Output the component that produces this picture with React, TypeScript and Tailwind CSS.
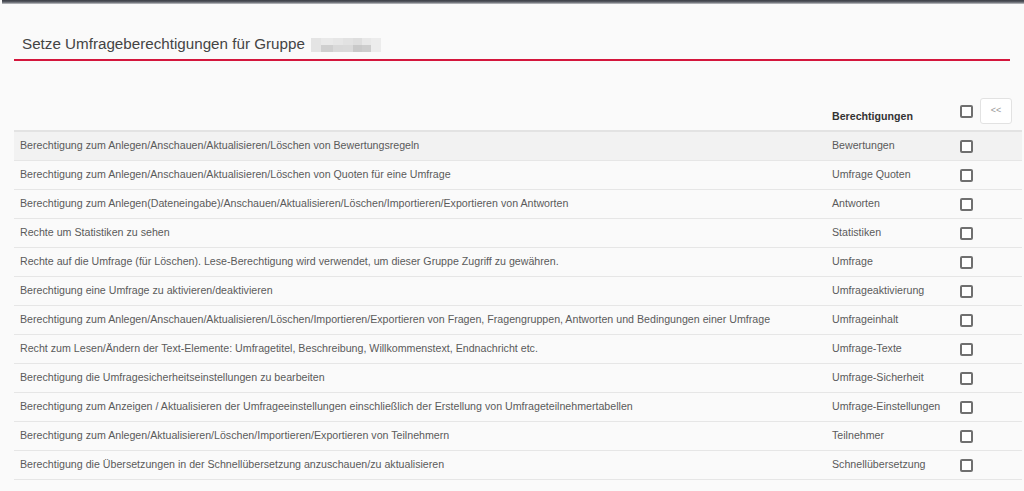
import { useState } from 'react';

const rows: [string, string][] = [
  ['Berechtigung zum Anlegen/Anschauen/Aktualisieren/Löschen von Bewertungsregeln', 'Bewertungen'],
  ['Berechtigung zum Anlegen/Anschauen/Aktualisieren/Löschen von Quoten für eine Umfrage', 'Umfrage Quoten'],
  ['Berechtigung zum Anlegen(Dateneingabe)/Anschauen/Aktualisieren/Löschen/Importieren/Exportieren von Antworten', 'Antworten'],
  ['Rechte um Statistiken zu sehen', 'Statistiken'],
  ['Rechte auf die Umfrage (für Löschen). Lese-Berechtigung wird verwendet, um dieser Gruppe Zugriff zu gewähren.', 'Umfrage'],
  ['Berechtigung eine Umfrage zu aktivieren/deaktivieren', 'Umfrageaktivierung'],
  ['Berechtigung zum Anlegen/Anschauen/Aktualisieren/Löschen/Importieren/Exportieren von Fragen, Fragengruppen, Antworten und Bedingungen einer Umfrage', 'Umfrageinhalt'],
  ['Recht zum Lesen/Ändern der Text-Elemente: Umfragetitel, Beschreibung, Willkommenstext, Endnachricht etc.', 'Umfrage-Texte'],
  ['Berechtigung die Umfragesicherheitseinstellungen zu bearbeiten', 'Umfrage-Sicherheit'],
  ['Berechtigung zum Anzeigen / Aktualisieren der Umfrageeinstellungen einschließlich der Erstellung von Umfrageteilnehmertabellen', 'Umfrage-Einstellungen'],
  ['Berechtigung zum Anlegen/Aktualisieren/Löschen/Importieren/Exportieren von Teilnehmern', 'Teilnehmer'],
  ['Berechtigung die Übersetzungen in der Schnellübersetzung anzuschauen/zu aktualisieren', 'Schnellübersetzung'],
];

function Box({ checked, onClick }: { checked: boolean; onClick: () => void }) {
  return (
    <span
      onClick={onClick}
      className="block w-[13px] h-[13px] border-2 border-[#6f6f6f] rounded-[2px] bg-white cursor-pointer"
      style={checked ? { background: '#555' } : undefined}
    />
  );
}

export default function App() {
  const [checked, setChecked] = useState<boolean[]>(rows.map(() => false));
  const [all, setAll] = useState(false);

  return (
    <div className="w-[1024px] h-[491px] bg-[#fafafa] overflow-hidden font-['Liberation_Sans',Arial,sans-serif]">
      <div className="h-[4px] bg-gradient-to-b from-[#3a3d44] via-[#5b5e66] to-[#c8c9cc] ml-[2px]" />

      <div className="px-[14px] pt-[31px]">
        <div className="flex items-center gap-[6px] pl-[8px] pb-[6px] border-b-2 border-[#d4163c]">
          <h1 className="text-[15.2px] text-[#444] leading-[18px]">Setze Umfrageberechtigungen für Gruppe</h1>
          {/* pixelated group name */}
          <div className="flex h-[14px] mt-[1px]">
            <span className="w-[10px] bg-[#e4e4e4]" />
            <span className="w-[12px] flex flex-col"><span className="h-[7px] bg-[#e9e9e9]" /><span className="h-[7px] bg-[#cfcfcf]" /></span>
            <span className="w-[10px] flex flex-col"><span className="h-[7px] bg-[#e6e6e6]" /><span className="h-[7px] bg-[#d9d9d9]" /></span>
            <span className="w-[10px] flex flex-col"><span className="h-[7px] bg-[#e2e2e2]" /><span className="h-[7px] bg-[#dadada]" /></span>
            <span className="w-[9px] flex flex-col"><span className="h-[7px] bg-[#dedede]" /><span className="h-[7px] bg-[#c9c9c9]" /></span>
            <span className="w-[9px] flex flex-col"><span className="h-[7px] bg-[#e8e8e8]" /><span className="h-[7px] bg-[#cdcdcd]" /></span>
            <span className="w-[10px] bg-[#ececec]" />
          </div>
        </div>

        <table className="w-[1008px] table-fixed mt-[37px] border-collapse text-[10.65px] text-[#5a5a5a]">
          <colgroup>
            <col className="w-[814px]" />
            <col className="w-[126px]" />
            <col className="w-[68px]" />
          </colgroup>
          <thead>
            <tr className="border-b-2 border-[#e3e3e3]">
              <th />
              <th className="text-left align-bottom pl-[4px] pb-[5px] font-bold text-[#333] text-[10.65px]">Berechtigungen</th>
              <th className="pb-[6px]">
                <div className="flex items-center gap-[7px] pl-[6px]">
                  <Box checked={all} onClick={() => { setAll(!all); setChecked(rows.map(() => !all)); }} />
                  <button className="w-[32px] h-[26px] bg-white border border-[#e2e2e2] rounded-[3px] text-[9px] text-[#999] font-normal">&lt;&lt;</button>
                </div>
              </th>
            </tr>
          </thead>
          <tbody>
            {rows.map(([desc, name], i) => (
              <tr key={name} className={`h-[29px] border-b border-[#e6e6e6] ${i === 0 ? 'bg-[#f2f2f2]' : ''}`}>
                <td className="pl-[6px] whitespace-nowrap">{desc}</td>
                <td className="pl-[4px] whitespace-nowrap">{name}</td>
                <td className="pl-[6px] pt-[1px]">
                  <Box checked={checked[i]} onClick={() => setChecked(c => c.map((v, j) => (j === i ? !v : v)))} />
                </td>
              </tr>
            ))}
          </tbody>
        </table>
      </div>
    </div>
  );
}
